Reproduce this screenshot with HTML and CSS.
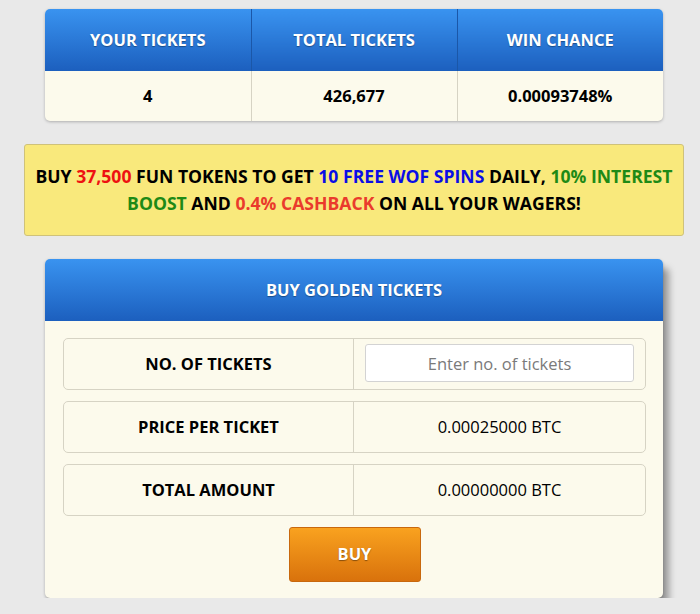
FILE: index.html
```html
<!DOCTYPE html>
<html lang="en">

<head>
    <meta charset="UTF-8">
    <meta name="viewport" content="width=device-width, initial-scale=1.0">
    <title>Golden Tickets</title>
    <link rel="stylesheet" href="styles.css">
</head>

<body>
    <div class="box stats">
        <table class="stats-table">
            <thead>
                <tr>
                    <th>YOUR TICKETS</th>
                    <th>TOTAL TICKETS</th>
                    <th>WIN CHANCE</th>
                </tr>
            </thead>
            <tbody>
                <tr>
                    <td>4</td>
                    <td>426,677</td>
                    <td>0.00093748%</td>
                </tr>
            </tbody>
        </table>
    </div>

    <div class="promo">
        BUY <span class="red">37,500</span> FUN TOKENS TO GET <span class="blue">10 FREE WOF SPINS</span> DAILY,
        <span class="green">10% INTEREST BOOST</span> AND <span class="orange">0.4% CASHBACK</span> ON ALL YOUR WAGERS!
    </div>

    <div class="box buy">
        <div class="box-head">BUY GOLDEN TICKETS</div>
        <div class="box-body">
            <div class="row">
                <div class="label">NO. OF TICKETS</div>
                <div class="value"><input type="text" class="ticket-input" placeholder="Enter no. of tickets"></div>
            </div>
            <div class="row">
                <div class="label">PRICE PER TICKET</div>
                <div class="value">0.00025000 BTC</div>
            </div>
            <div class="row">
                <div class="label">TOTAL AMOUNT</div>
                <div class="value">0.00000000 BTC</div>
            </div>
            <button class="buy-btn">BUY</button>
        </div>
    </div>
</body>

</html>
```

FILE: styles.css
```css
* {
    margin: 0;
    padding: 0;
    box-sizing: border-box;
}

body {
    font-family: "Open Sans", Arial, sans-serif;
    background: #e9e9e9;
    color: #000;
    padding: 9px 0 0 0;
}

.box {
    width: 618px;
    margin-left: 45px;
    background: #fcfaec;
    border-radius: 5px;
    box-shadow: 0 1px 3px rgba(0, 0, 0, 0.25);
    overflow: hidden;
}

.stats-table {
    width: 100%;
    border-collapse: collapse;
    table-layout: fixed;
}

.stats-table th,
.box-head {
    height: 62px;
    background: linear-gradient(#3993f0, #1c5fbe);
    color: #fff;
    font-size: 16.5px;
    font-weight: 700;
    text-shadow: 0 1px 1px rgba(0, 0, 0, 0.35);
    text-align: center;
    padding-bottom: 2px;
}

.stats-table th {
    border-right: 1px solid #1b57a8;
}

.stats-table td {
    height: 50px;
    text-align: center;
    font-size: 16.5px;
    font-weight: 700;
    border-right: 1px solid #d6d3c4;
    padding-bottom: 1px;
}

.stats-table th:last-child,
.stats-table td:last-child {
    border-right: none;
}

.promo {
    width: 660px;
    margin: 23px 0 0 24px;
    height: 92px;
    background: #f9e97c;
    border: 1px solid #cfc27a;
    border-radius: 3px;
    font-size: 17.6px;
    font-weight: 700;
    line-height: 27px;
    text-align: center;
    padding: 18px 8px 0;
}

.red { color: #ee1111; }
.blue { color: #0b0ee6; }
.green { color: #1e8a16; }
.orange { color: #ea3b2c; }

.buy {
    margin-top: 23px;
    box-shadow: 0 1px 3px rgba(0, 0, 0, 0.25), 6px 9px 7px rgba(0, 0, 0, 0.35);
}

.box-head {
    display: flex;
    align-items: center;
    justify-content: center;
}

.box-body {
    padding: 17px 17px 16px 18px;
    display: flex;
    flex-direction: column;
    align-items: center;
    gap: 11px;
}

.row {
    width: 100%;
    height: 52px;
    display: flex;
    border: 1px solid #d6d3c4;
    border-radius: 5px;
}

.label {
    width: 290px;
    border-right: 1px solid #d6d3c4;
    display: flex;
    align-items: center;
    justify-content: center;
    font-size: 16.5px;
    font-weight: 700;
    padding-bottom: 2px;
}

.value {
    flex: 1;
    display: flex;
    align-items: center;
    justify-content: center;
    font-size: 16.5px;
    padding: 0 11px 2px;
}

.ticket-input {
    width: 100%;
    height: 38px;
    border: 1px solid #d3d3d3;
    border-radius: 3px;
    background: #fff;
    font-family: inherit;
    font-size: 16.5px;
    text-align: center;
    outline: none;
}

.ticket-input::placeholder {
    color: #7a7a7a;
}

.buy-btn {
    width: 132px;
    height: 55px;
    background: linear-gradient(#f9a21f, #d9720c);
    border: 1px solid #c8680d;
    border-radius: 3px;
    color: #fff;
    font-family: inherit;
    font-size: 16.5px;
    font-weight: 700;
    text-shadow: 0 1px 1px rgba(0, 0, 0, 0.4);
    padding-bottom: 2px;
}
```
